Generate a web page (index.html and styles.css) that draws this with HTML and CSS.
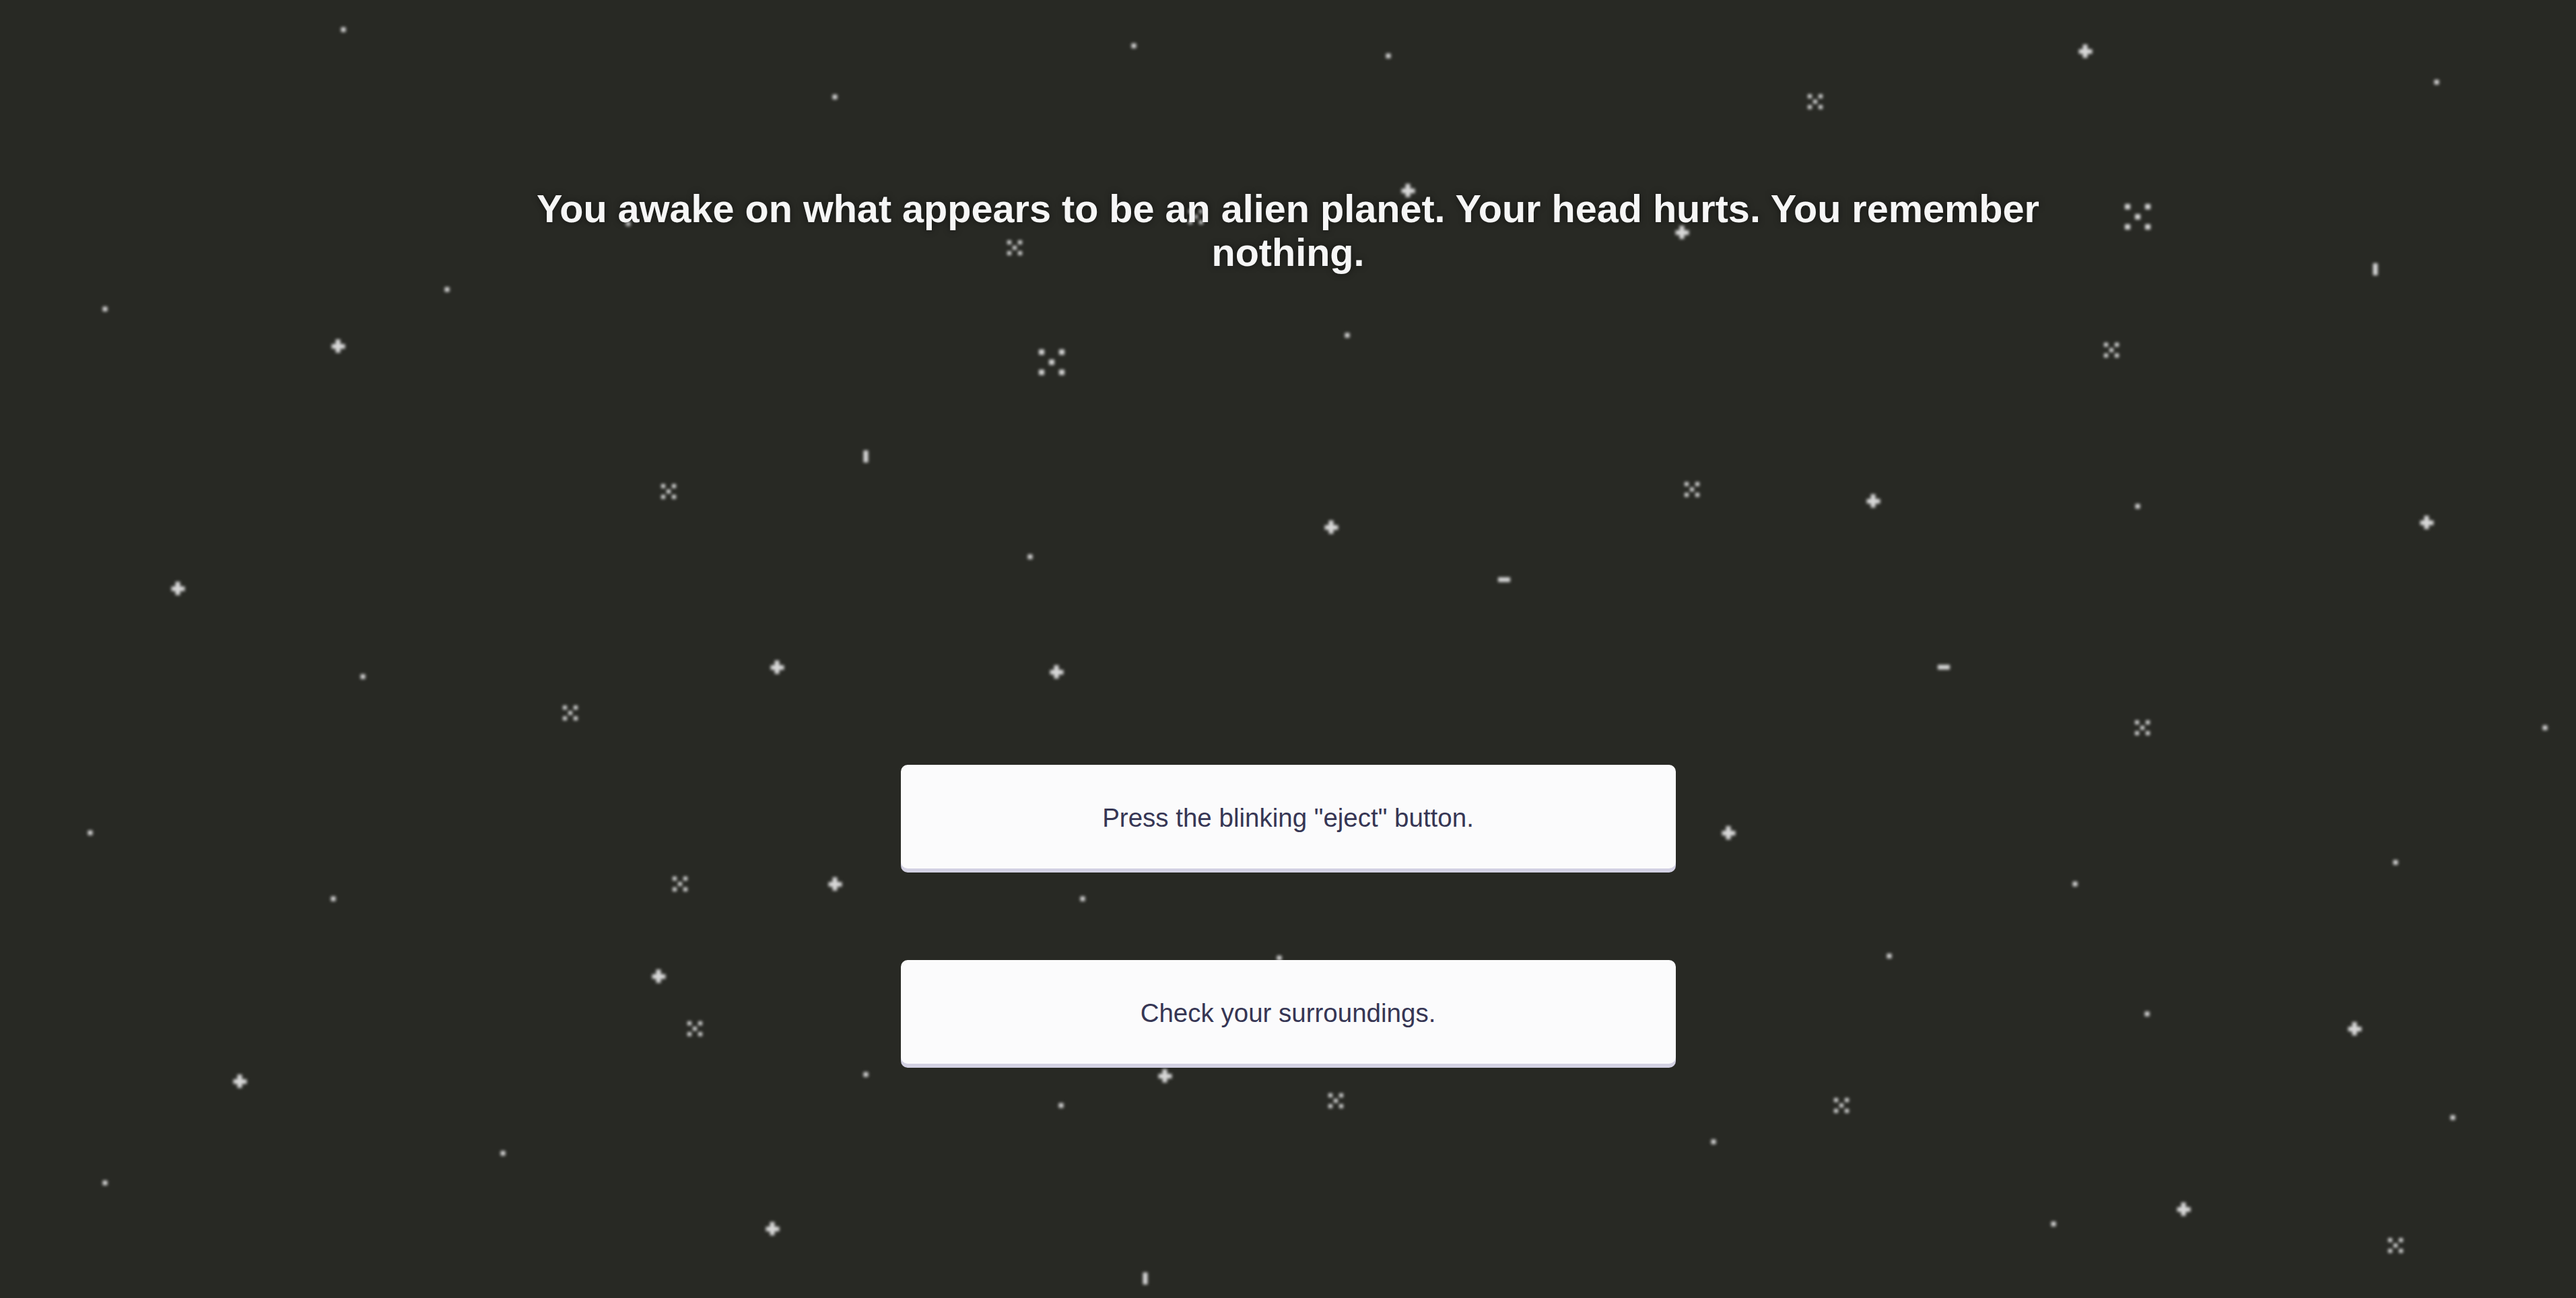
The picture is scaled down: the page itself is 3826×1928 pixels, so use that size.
FILE: index.html
```html
<!DOCTYPE html>
<html lang="en">
<head>
<meta charset="utf-8">
<title>Alien Planet</title>
<link rel="stylesheet" href="styles.css">
</head>
<body>
<div class="sky" aria-hidden="true">
  <i class="star dot" style="left:510px;top:44px"></i>
  <i class="star dot" style="left:1684px;top:68px"></i>
  <i class="star dot" style="left:2062px;top:83px"></i>
  <i class="star plus" style="left:3097px;top:76px"></i>
  <i class="star x" style="left:2696px;top:151px"></i>
  <i class="star dot" style="left:1240px;top:144px"></i>
  <i class="star dot" style="left:3619px;top:122px"></i>
  <i class="star plus" style="left:2091px;top:283px"></i>
  <i class="star dot" style="left:933px;top:332px"></i>
  <i class="star x" style="left:1776px;top:322px"></i>
  <i class="star plus" style="left:2498px;top:345px"></i>
  <i class="star x" style="left:1507px;top:368px"></i>
  <i class="star xl" style="left:3175px;top:322px"></i>
  <i class="star xl" style="left:1562px;top:538px"></i>
  <i class="star vbar" style="left:3528px;top:400px"></i>
  <i class="star dot" style="left:156px;top:459px"></i>
  <i class="star dot" style="left:664px;top:430px"></i>
  <i class="star plus" style="left:502px;top:514px"></i>
  <i class="star dot" style="left:2001px;top:498px"></i>
  <i class="star x" style="left:3136px;top:520px"></i>
  <i class="star vbar" style="left:1286px;top:678px"></i>
  <i class="star x" style="left:993px;top:730px"></i>
  <i class="star x" style="left:2513px;top:727px"></i>
  <i class="star plus" style="left:2782px;top:744px"></i>
  <i class="star dot" style="left:3175px;top:752px"></i>
  <i class="star plus" style="left:3604px;top:776px"></i>
  <i class="star plus" style="left:1977px;top:783px"></i>
  <i class="star dot" style="left:1530px;top:827px"></i>
  <i class="star hbar" style="left:2234px;top:861px"></i>
  <i class="star plus" style="left:264px;top:874px"></i>
  <i class="star dot" style="left:539px;top:1005px"></i>
  <i class="star plus" style="left:1154px;top:991px"></i>
  <i class="star plus" style="left:1569px;top:998px"></i>
  <i class="star x" style="left:847px;top:1059px"></i>
  <i class="star hbar" style="left:2887px;top:991px"></i>
  <i class="star x" style="left:3182px;top:1081px"></i>
  <i class="star dot" style="left:3780px;top:1081px"></i>
  <i class="star dot" style="left:134px;top:1237px"></i>
  <i class="star plus" style="left:2567px;top:1237px"></i>
  <i class="star x" style="left:1010px;top:1313px"></i>
  <i class="star plus" style="left:1240px;top:1313px"></i>
  <i class="star dot" style="left:495px;top:1335px"></i>
  <i class="star dot" style="left:1608px;top:1335px"></i>
  <i class="star dot" style="left:3082px;top:1313px"></i>
  <i class="star dot" style="left:3558px;top:1281px"></i>
  <i class="star dot" style="left:1900px;top:1423px"></i>
  <i class="star dot" style="left:2806px;top:1420px"></i>
  <i class="star plus" style="left:978px;top:1450px"></i>
  <i class="star x" style="left:1032px;top:1528px"></i>
  <i class="star dot" style="left:3189px;top:1506px"></i>
  <i class="star plus" style="left:3497px;top:1528px"></i>
  <i class="star plus" style="left:356px;top:1606px"></i>
  <i class="star dot" style="left:1286px;top:1596px"></i>
  <i class="star plus" style="left:1730px;top:1598px"></i>
  <i class="star dot" style="left:1576px;top:1642px"></i>
  <i class="star x" style="left:1984px;top:1635px"></i>
  <i class="star x" style="left:2735px;top:1642px"></i>
  <i class="star dot" style="left:3643px;top:1660px"></i>
  <i class="star dot" style="left:747px;top:1713px"></i>
  <i class="star dot" style="left:2545px;top:1696px"></i>
  <i class="star dot" style="left:156px;top:1757px"></i>
  <i class="star plus" style="left:1147px;top:1825px"></i>
  <i class="star dot" style="left:3050px;top:1818px"></i>
  <i class="star plus" style="left:3243px;top:1796px"></i>
  <i class="star x" style="left:3558px;top:1850px"></i>
  <i class="star vbar" style="left:1701px;top:1899px"></i>
</div>

<main class="story">
  <h1 class="story-text">You awake on what appears to be an alien planet. Your head hurts. You remember nothing.</h1>
  <div class="choices">
    <button class="choice" type="button">Press the blinking "eject" button.</button>
    <button class="choice" type="button">Check your surroundings.</button>
  </div>
</main>
</body>
</html>
```

FILE: styles.css
```css
html, body {
  margin: 0;
  padding: 0;
  height: 100%;
}

body {
  background: #282924;
  font-family: "Liberation Sans", Arial, Helvetica, sans-serif;
  overflow: hidden;
  position: relative;
}

.sky {
  position: absolute;
  inset: 0;
  z-index: 0;
}

.star {
  position: absolute;
  display: block;
  width: 7px;
  height: 7px;
  background: #d8d8d8;
  transform: translate(-50%, -50%);
  filter: blur(2px);
}

.star.vbar {
  width: 7px;
  height: 18px;
}

.star.hbar {
  width: 18px;
  height: 7px;
}

.star.plus {
  width: 7px;
  height: 20px;
}

.star.plus::after {
  content: "";
  position: absolute;
  left: -6.5px;
  top: 6.5px;
  width: 20px;
  height: 7px;
  background: #d8d8d8;
}

.star.x {
  width: 6px;
  height: 6px;
  box-shadow:
    -8px -8px 0 #d8d8d8,
    8px -8px 0 #d8d8d8,
    -8px 8px 0 #d8d8d8,
    8px 8px 0 #d8d8d8;
}

.star.xl {
  width: 8px;
  height: 8px;
  box-shadow:
    -15px -15px 0 #d8d8d8,
    15px -15px 0 #d8d8d8,
    -15px 15px 0 #d8d8d8,
    15px 15px 0 #d8d8d8;
}

.story {
  position: relative;
  z-index: 1;
  display: flex;
  flex-direction: column;
  align-items: center;
  padding-top: 278px;
}

.story-text {
  margin: 0;
  max-width: 2300px;
  color: #f6f6f6;
  font-size: 57.6px;
  font-weight: 700;
  line-height: 65px;
  text-align: center;
  text-shadow: 0 0 10px rgba(0, 0, 0, 0.55);
}

.choices {
  margin-top: 728px;
  display: flex;
  flex-direction: column;
  gap: 136px;
}

.choice {
  width: 1151px;
  height: 154px;
  border: 0;
  border-radius: 10px;
  background: #fbfbfc;
  box-shadow: 0 6px 0 #d3d1e3;
  color: #363654;
  font-family: "Liberation Sans", Arial, Helvetica, sans-serif;
  font-size: 38.5px;
  padding: 4px 0 0;
  cursor: pointer;
}
```
